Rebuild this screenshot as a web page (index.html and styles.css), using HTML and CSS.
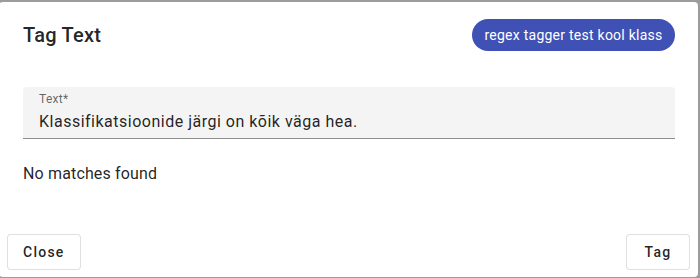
FILE: index.html
```html
<!DOCTYPE html>
<html lang="et">
<head>
<meta charset="utf-8">
<title>Tag Text</title>
<link rel="stylesheet" href="styles.css">
</head>
<body>
<div class="dialog">
  <div class="header">
    <h2 class="title">Tag Text</h2>
    <span class="chip">regex tagger test kool klass</span>
  </div>
  <div class="content">
    <div class="field">
      <label class="label">Text*</label>
      <div class="value">Klassifikatsioonide järgi on kõik väga hea.</div>
    </div>
    <p class="empty">No matches found</p>
  </div>
  <div class="actions">
    <button class="btn">Close</button>
    <button class="btn">Tag</button>
  </div>
</div>
</body>
</html>
```
FILE: styles.css
```css
html, body {
  margin: 0;
  padding: 0;
  height: 100%;
  overflow: hidden;
}
body {
  background: #9c9c9c;
  font-family: Roboto, "Liberation Sans", sans-serif;
  color: rgba(0, 0, 0, 0.87);
}
.dialog {
  box-sizing: border-box;
  margin: 2px 0 0 -1px;
  width: 699px;
  height: 275px;
  background: #fff;
  border-radius: 4px;
  display: flex;
  flex-direction: column;
}
.header {
  display: flex;
  justify-content: space-between;
  align-items: center;
  padding: 17px 23px 0 24px;
}
.title {
  margin: 0;
  font-size: 20px;
  font-weight: 500;
  line-height: 32px;
  letter-spacing: 0.25px;
  color: rgba(0, 0, 0, 0.87);
}
.chip {
  box-sizing: border-box;
  height: 32px;
  display: inline-flex;
  align-items: center;
  justify-content: center;
  width: 203px;
  border-radius: 16px;
  background: #3f51b5;
  color: #fff;
  font-size: 14px;
  letter-spacing: 0.25px;
}
.content {
  padding: 36px 23px 0 24px;
  flex: 1;
}
.field {
  box-sizing: border-box;
  height: 52px;
  background: #f4f4f4;
  border-radius: 4px 4px 0 0;
  border-bottom: 1px solid #8f8f8f;
  padding: 4px 16px 0;
}
.label {
  display: block;
  font-size: 12px;
  line-height: 16px;
  letter-spacing: 0.3px;
  color: rgba(0, 0, 0, 0.6);
}
.value {
  margin-top: 3px;
  font-size: 16px;
  line-height: 24px;
  letter-spacing: 0.5px;
  color: rgba(0, 0, 0, 0.87);
}
.empty {
  margin: 23px 0 0;
  font-size: 16px;
  line-height: 24px;
  letter-spacing: 0.15px;
}
.actions {
  display: flex;
  justify-content: space-between;
  padding: 0 8px 7px 8px;
}
.btn {
  box-sizing: border-box;
  height: 36px;
  min-width: 64px;
  padding: 0 15px;
  background: #fff;
  border: 1px solid rgba(0, 0, 0, 0.12);
  border-radius: 4px;
  font-family: Roboto, "Liberation Sans", sans-serif;
  font-size: 14px;
  font-weight: 500;
  letter-spacing: 1.25px;
  color: rgba(0, 0, 0, 0.87);
}
```
